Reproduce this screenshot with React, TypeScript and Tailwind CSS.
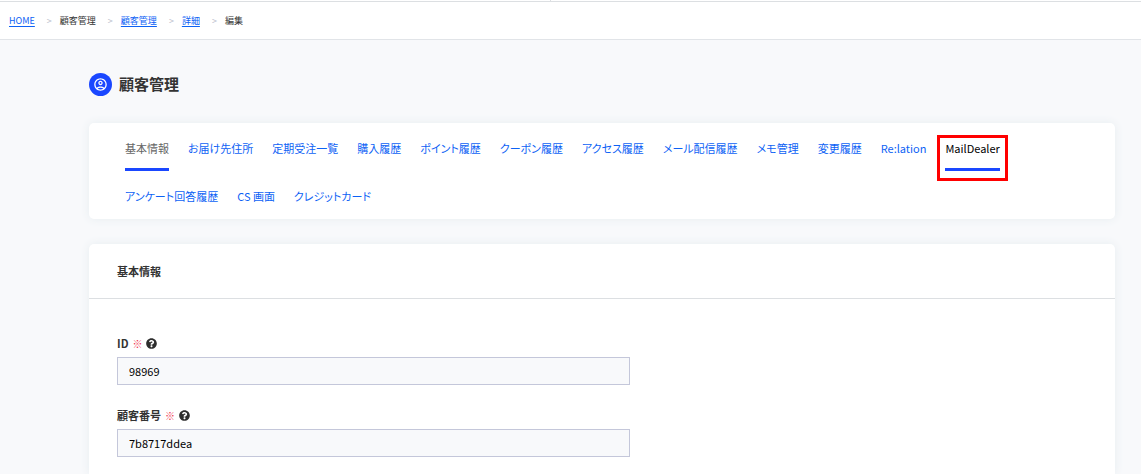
import { Fragment } from "react";

const crumbs = [
  { label: "HOME", link: true },
  { label: "顧客管理", link: false },
  { label: "顧客管理", link: true },
  { label: "詳細", link: true },
  { label: "編集", link: false },
];

const tabs = [
  { label: "基本情報", state: "current" },
  { label: "お届け先住所" },
  { label: "定期受注一覧" },
  { label: "購入履歴" },
  { label: "ポイント履歴" },
  { label: "クーポン履歴" },
  { label: "アクセス履歴" },
  { label: "メール配信履歴" },
  { label: "メモ管理" },
  { label: "変更履歴" },
  { label: "Re:lation" },
  { label: "MailDealer", state: "marked" },
  { label: "アンケート回答履歴" },
  { label: "CS 画面" },
  { label: "クレジットカード" },
];

function UserIcon() {
  return (
    <span className="flex size-[23px] items-center justify-center rounded-full bg-[#1a47ff]">
      <svg viewBox="0 0 24 24" className="size-[15px]" fill="#ffffff" aria-hidden="true">
        <path d="M12 2C6.48 2 2 6.48 2 12s4.48 10 10 10 10-4.48 10-10S17.52 2 12 2zM7.35 18.5C8.66 17.56 10.26 17 12 17s3.34.56 4.65 1.5C15.34 19.44 13.74 20 12 20s-3.34-.56-4.65-1.5zm10.79-1.38C16.45 15.8 14.32 15 12 15s-4.45.8-6.14 2.12C4.7 15.73 4 13.95 4 12c0-4.42 3.58-8 8-8s8 3.58 8 8c0 1.95-.7 3.73-1.86 5.12z" />
        <path d="M12 6c-1.93 0-3.5 1.57-3.5 3.5S10.07 13 12 13s3.5-1.57 3.5-3.5S13.93 6 12 6zm0 5c-.83 0-1.5-.67-1.5-1.5S11.17 8 12 8s1.5.67 1.5 1.5S12.83 11 12 11z" />
      </svg>
    </span>
  );
}

function HelpIcon() {
  return (
    <svg viewBox="0 0 512 512" className="size-[11px]" fill="#2d2d2d" aria-hidden="true">
      <path d="M504 256c0 137-111 248-248 248S8 393 8 256C8 119.100 119 8 256 8s248 111.100 248 248zM262.700 90c-54.500 0-89.300 23-116.500 63.800-3.500 5.300-2.400 12.400 2.700 16.300l34.700 26.300c5.200 3.900 12.600 3 16.700-2.100 17.900-22.700 30.100-35.800 57.300-35.800 20.400 0 45.700 13.100 45.700 33 0 15-12.400 22.700-32.500 34C247.100 238.500 216 254.900 216 296v4c0 6.600 5.400 12 12 12h56c6.600 0 12-5.400 12-12v-1.300c0-28.500 83.200-29.600 83.200-106.700 0-58-60.200-102-116.500-102zM256 338c-25.400 0-46 20.600-46 46s20.600 46 46 46 46-20.600 46-46-20.600-46-46-46z" />
    </svg>
  );
}

function Field({ id, label, value }: { id: string; label: string; value: string }) {
  return (
    <div>
      <label htmlFor={id} className="flex h-4 items-center gap-1 text-[11px] font-bold">
        {label}
        <span className="text-[10px] font-normal text-[#f0364f]">※</span>
        <HelpIcon />
      </label>
      <input
        id={id}
        readOnly
        defaultValue={value}
        className="mt-1.5 block h-7 w-full max-w-[513px] border border-[#c4c7da] bg-[#f8f9fb] px-[11px] text-[11px] text-black outline-none"
      />
    </div>
  );
}

export default function App() {
  return (
    <div className="min-h-screen bg-[#f8f9fb] font-['Noto_Sans_CJK_JP','Noto_Sans_JP',sans-serif] text-[#333333] [font-feature-settings:'palt']">
      <div className="flex h-0.5 justify-center border-b border-[#dcdfe2] bg-white pr-10">
        <span className="h-px w-px bg-[#dcdfe2]" />
      </div>
      <nav className="flex h-[38px] items-center border-b border-[#e1e4e8] bg-white px-[9px] text-[9px]">
        {crumbs.map((crumb, i) => (
          <Fragment key={i}>
            {i > 0 && <span className="mr-2 ml-3 text-[#b9bdcb]">&gt;</span>}
            {crumb.link ? (
              <a href="#" className="text-[#0d62f5] underline underline-offset-2">{crumb.label}</a>
            ) : (
              <span>{crumb.label}</span>
            )}
          </Fragment>
        ))}
      </nav>

      <main className="pt-8 pr-[26px] pl-[89px]">
        <div className="flex items-center gap-[7px]">
          <UserIcon />
          <h1 className="text-[15px] leading-6 font-bold">顧客管理</h1>
        </div>

        <nav className="mt-[27px] flex flex-wrap gap-x-[19px] rounded-[5px] bg-white px-9 text-[11px] shadow-[0_0_10px_#e6edf0]">
          {tabs.map((tab) => (
            <a
              key={tab.label}
              href="#"
              className={
                tab.state === "current"
                  ? "flex h-12 items-center border-b-3 border-[#1a47ff] pt-1.5 text-[#666666]"
                  : tab.state === "marked"
                    ? "relative flex h-12 items-center border-b-3 border-[#1a47ff] pt-1.5 text-black"
                    : "flex h-12 items-center border-b-3 border-transparent pt-1.5 text-[#0d62f5]"
              }
            >
              {tab.label}
              {tab.state === "marked" && (
                <span className="absolute -inset-x-2 top-3 -bottom-[13px] border-3 border-[#ff0000]" />
              )}
            </a>
          ))}
        </nav>

        <section className="mt-[25px] rounded-t-[5px] bg-white shadow-[0_0_10px_#e6edf0]">
          <h2 className="flex h-[55px] items-center border-b border-[#dcdfe2] px-7 text-[11px] font-bold">基本情報</h2>
          <div className="flex flex-col gap-[22px] px-7 pt-9 pb-[17px]">
            <Field id="customer-id" label="ID" value="98969" />
            <Field id="customer-number" label="顧客番号" value="7b8717ddea" />
          </div>
        </section>
      </main>
    </div>
  );
}
